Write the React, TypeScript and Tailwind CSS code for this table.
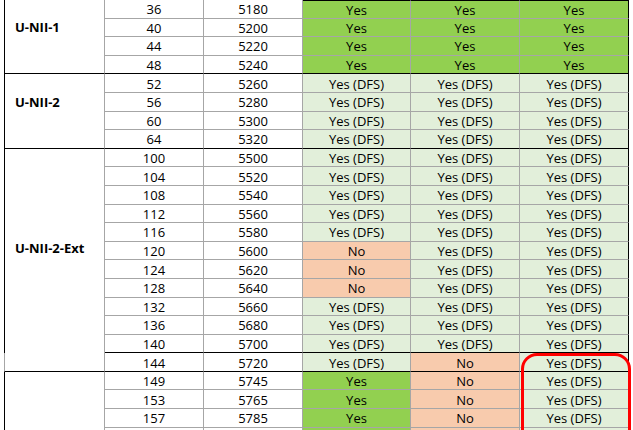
type Fill = 'g' | 'l' | 'o';
type Cell = [string, Fill];
type Row = { ch: string; freq: string; cells: Cell[] };
type Group = { label: string; rows: Row[]; labelPad: string; labelBorder: string; bottomBlack: boolean; top?: boolean };

const fillClass: Record<Fill, string> = {
  g: 'bg-[#92d050]',
  l: 'bg-[#e2efda]',
  o: 'bg-[#f8cbad]',
};

const YES: Cell = ['Yes', 'g'];
const DFS: Cell = ['Yes (DFS)', 'l'];
const NO: Cell = ['No', 'o'];

const row = (ch: string, freq: string, cells: Cell[]): Row => ({ ch, freq, cells });

const groups: Group[] = [
  {
    label: 'U-NII-1',
    labelPad: 'pb-[18px]',
    labelBorder: 'border-l-black border-b border-b-black',
    bottomBlack: true,
    top: true,
    rows: [
      row('36', '5180', [YES, YES, YES]),
      row('40', '5200', [YES, YES, YES]),
      row('44', '5220', [YES, YES, YES]),
      row('48', '5240', [YES, YES, YES]),
    ],
  },
  {
    label: 'U-NII-2',
    labelPad: 'pb-[18px]',
    labelBorder: 'border-l-black border-b border-b-black',
    bottomBlack: true,
    rows: [
      row('52', '5260', [DFS, DFS, DFS]),
      row('56', '5280', [DFS, DFS, DFS]),
      row('60', '5300', [DFS, DFS, DFS]),
      row('64', '5320', [DFS, DFS, DFS]),
    ],
  },
  {
    label: 'U-NII-2-Ext',
    labelPad: 'pb-[6px]',
    labelBorder: 'border-l-black',
    bottomBlack: true,
    rows: [
      row('100', '5500', [DFS, DFS, DFS]),
      row('104', '5520', [DFS, DFS, DFS]),
      row('108', '5540', [DFS, DFS, DFS]),
      row('112', '5560', [DFS, DFS, DFS]),
      row('116', '5580', [DFS, DFS, DFS]),
      row('120', '5600', [NO, DFS, DFS]),
      row('124', '5620', [NO, DFS, DFS]),
      row('128', '5640', [NO, DFS, DFS]),
      row('132', '5660', [DFS, DFS, DFS]),
      row('136', '5680', [DFS, DFS, DFS]),
      row('140', '5700', [DFS, DFS, DFS]),
    ],
  },
  {
    label: '',
    labelPad: '',
    labelBorder: 'border-l-[#a6a6a6] border-b border-b-black',
    bottomBlack: true,
    rows: [row('144', '5720', [DFS, NO, DFS])],
  },
  {
    label: '',
    labelPad: '',
    labelBorder: 'border-l-black',
    bottomBlack: false,
    rows: [
      row('149', '5745', [YES, NO, DFS]),
      row('153', '5765', [YES, NO, DFS]),
      row('157', '5785', [YES, NO, DFS]),
      // next row only peeks in at the bottom edge, so no text
      row('', '', [['', 'g'], ['', 'o'], ['', 'l']]),
    ],
  },
];

const statusWidths = ['w-[108px]', 'w-[109px]', 'w-[109px]'];

function TableRow({ data, last, bottomBlack, top }: { data: Row; last: boolean; bottomBlack: boolean; top: boolean }) {
  const bottom = last && bottomBlack ? 'border-b-black' : 'border-b-[#a6a6a6]';
  const base = `flex items-center justify-center pt-[2px] border-r border-b ${bottom}`;

  return (
    <div className="flex h-[18.6px]">
      <div className={`${base} w-[99px] border-r-[#a6a6a6]`}>{data.ch}</div>
      <div className={`${base} w-[99px] border-r-[#a6a6a6]`}>{data.freq}</div>
      {data.cells.map(([text, fill], i) => (
        <div
          key={i}
          className={`${base} ${statusWidths[i]} ${fillClass[fill]} ${i === 2 ? 'border-r-black' : 'border-r-[#a6a6a6]'} ${top ? 'border-t border-t-black' : ''}`}
        >
          {text}
        </div>
      ))}
    </div>
  );
}

function BandGroup({ group }: { group: Group }) {
  return (
    <div className="flex">
      <div className={`w-[101px] shrink-0 flex items-center pl-[10px] border-l border-r border-r-[#a6a6a6] font-bold ${group.labelBorder} ${group.labelPad}`}>
        {group.label}
      </div>
      <div className="flex flex-col">
        {group.rows.map((r, i) => (
          <TableRow key={i} data={r} last={i === group.rows.length - 1} bottomBlack={group.bottomBlack} top={!!group.top && i === 0} />
        ))}
      </div>
    </div>
  );
}

export default function App() {
  return (
    <div className="relative w-[633px] h-[430px] overflow-hidden bg-white pl-1 font-['Open_Sans',sans-serif] text-[13px] leading-none text-black">
      {groups.map((g, i) => (
        <BandGroup key={i} group={g} />
      ))}
      {/* red highlight around the last column */}
      <div className="absolute left-[521px] top-[353px] w-[110px] h-[120px] rounded-[16px] border-[3px] border-[#ff0000]" />
    </div>
  );
}
